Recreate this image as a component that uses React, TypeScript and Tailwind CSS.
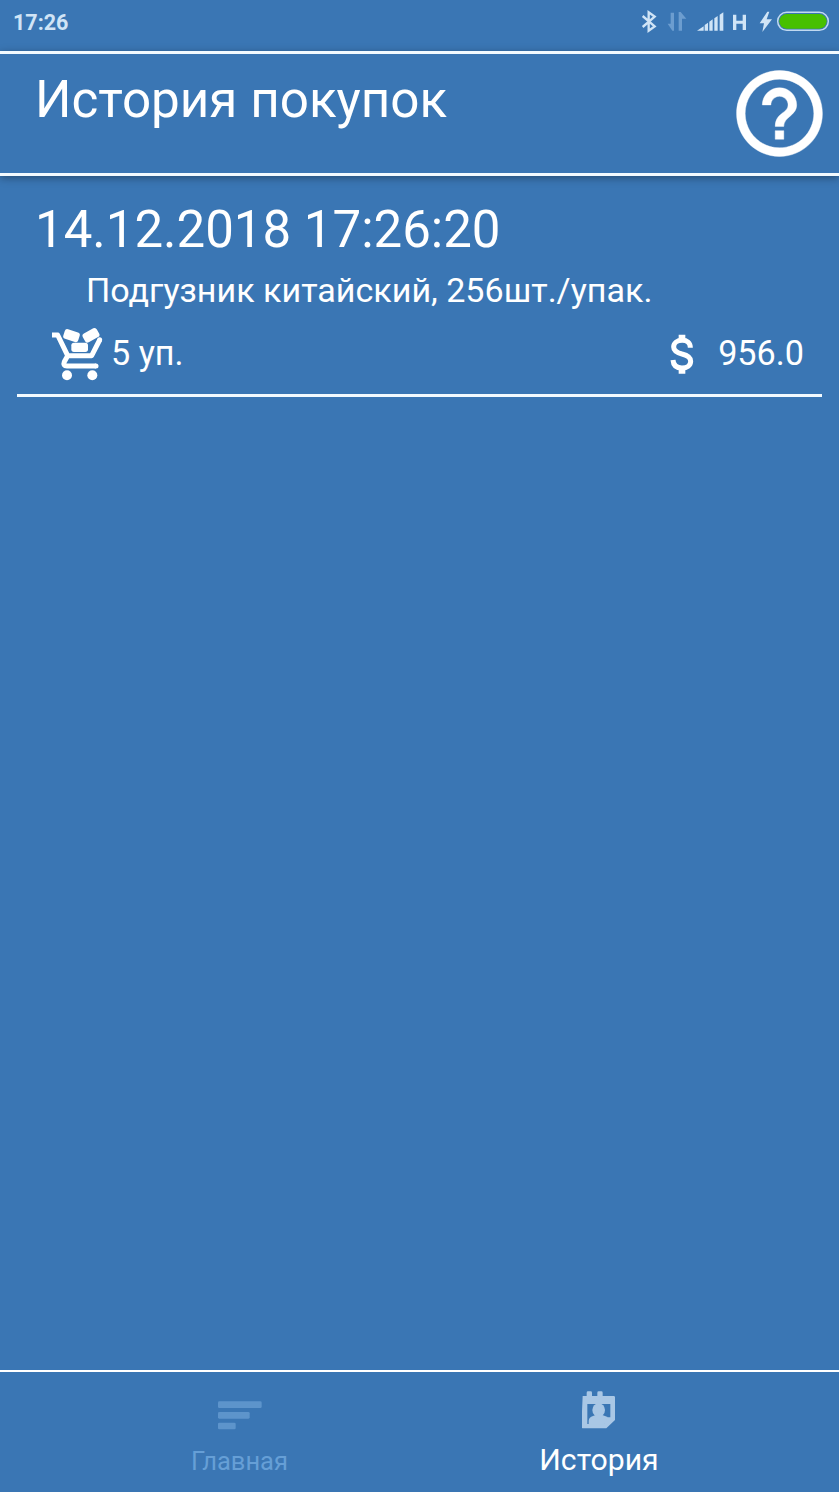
import React from "react";

function StatusIcons() {
  return (
    <svg width="209" height="51" viewBox="0 0 627 153" fill="#d0e4f6">
      <path d="M38 48 L74 79 L56 92 V37 L74 50 L38 81" fill="none" stroke="#d0e4f6" strokeWidth="7" />
      <g fill="#6c9dcf">
        <path d="M122 38h10v54h-5l-14-21h9z" />
        <path d="M146 92h10V56h13l-17-20h-6z" />
      </g>
      <path d="M201 92 l20-13 v13z M224 92v-17l10-7v24z M238 92v-27l10-7v34z M253 92v-37l10-7v44z M269 92v-48l11-7v55z" />
      <path d="M309 44h10v18h19V44h10v46h-10V71h-19v19h-10z" />
      <path d="M412 35 L389 70 H402 L397 96 L426 58 H410 L418 35z" />
      <rect x="443" y="37" width="152" height="54" rx="27" fill="#3a76b4" stroke="#c1d9f1" strokeWidth="4.5" />
      <rect x="448" y="42" width="142" height="44" rx="22" fill="#47c000" />
    </svg>
  );
}

function HelpIcon() {
  return (
    <svg width="103" height="103" viewBox="0 0 24 24" fill="#fff" stroke="#fff" strokeWidth="0.1">
      <path d="M11 18h2v-2h-2v2zm1-16C6.48 2 2 6.48 2 12s4.480 10 10 10 10-4.480 10-10S17.520 2 12 2zm0 18c-4.410 0-8-3.590-8-8s3.590-8 8-8 8 3.590 8 8-3.590 8-8 8zm0-14c-2.210 0-4 1.790-4 4h2c0-1.100.9-2 2-2s2 .9 2 2c0 2-3 1.750-3 5h2c0-2.250 3-2.500 3-5 0-2.210-1.790-4-4-4z" />
    </svg>
  );
}

function CartIcon() {
  return (
    <svg width="54" height="56" viewBox="60 48 162 168" fill="#fff">
      <path
        d="M66 75H83L113 137H185L209 90M113 137L103 155Q98 168 111 168H198"
        fill="none"
        stroke="#fff"
        strokeWidth="15"
        strokeLinejoin="round"
      />
      <circle cx="209" cy="89" r="7.5" />
      <circle cx="198" cy="168" r="7.5" />
      <rect x="-24" y="-15" width="47" height="30" rx="8" transform="translate(125 77) rotate(18)" />
      <rect x="-24" y="-15" width="48" height="30" rx="8" transform="translate(183 76) rotate(-29)" />
      <rect x="124" y="98" width="50" height="28" rx="8" />
      <circle cx="111" cy="196" r="15" />
      <circle cx="187" cy="196" r="15" />
    </svg>
  );
}

function DollarIcon() {
  return (
    <svg width="24" height="40" viewBox="62 43 72 120" fill="none" stroke="#fff">
      <path d="M98 45V61M98 146V162" strokeWidth="20" />
      <path
        d="M123 84C123 69 113 62 99 62C83 62 73 70 73 82C73 94 83 99 98 103C115 107 124 112 124 125C124 138 113 145 98 145C81 145 72 137 71 121"
        strokeWidth="15"
      />
    </svg>
  );
}

function BarsIcon() {
  return (
    <svg width="44" height="30" viewBox="0 0 132 90" fill="#5d94cb">
      <rect x="0" y="1" width="131" height="20" rx="4" />
      <rect x="0" y="33" width="95" height="20" rx="4" />
      <rect x="0" y="65" width="53" height="20" rx="4" />
    </svg>
  );
}

function HistoryIcon() {
  return (
    <svg width="34" height="38" viewBox="187 93 102 114" fill="#a9c7e5">
      <path
        fillRule="evenodd"
        d="M189 108h12V98q0-4 4-4h8q4 0 4 4v10h16V98q0-4 4-4h8q4 0 4 4v10h33q4 0 4 4v68l-26 25h-70q-5 0-5-5zM203 132v60h52v-14q0-6 6-6h11v-40z"
      />
      <ellipse cx="237" cy="150" rx="19" ry="20" />
      <path d="M207 193v-11q1-11 13-14l9-4h17l18 7-9 22z" />
    </svg>
  );
}

export default function App() {
  return (
    <div className="flex h-[1492px] w-[839px] flex-col overflow-hidden bg-[#3a76b4] font-['Roboto',sans-serif] text-white">
      <div className="flex h-[51px] shrink-0 justify-between pl-[13px]">
        <span className="pt-[12px] text-[21.5px] leading-[22px] font-bold text-[#d0e4f6]">17:26</span>
        <StatusIcons />
      </div>
      <header className="z-10 flex h-[125px] shrink-0 justify-between border-y-[3px] border-[#f2faff] bg-[#3a76b4] pr-2 pl-[35px] shadow-[0_2px_8px_rgba(0,0,0,0.35)]">
        <h1 className="pt-[16px] text-[51.2px] leading-[60px] whitespace-nowrap">История покупок</h1>
        <div className="pt-[8px]">
          <HelpIcon />
        </div>
      </header>
      <main className="flex-1 px-[17px]">
        <article className="h-[221px] border-b-[3px] border-[#f2faff] pt-[24px]">
          <h2 className="pl-[18px] text-[51px] leading-[60px] whitespace-nowrap">14.12.2018 17:26:20</h2>
          <p className="mt-[10px] pl-[69px] text-[34.1px] leading-[40px] whitespace-nowrap">Подгузник китайский, 256шт./упак.</p>
          <div className="mt-[16px] flex h-[56px] items-start text-[34.2px] leading-[54px]">
            <div className="ml-[33px]">
              <CartIcon />
            </div>
            <span className="ml-[7px]">5 уп.</span>
            <div className="mt-[8px] mr-[24px] ml-auto">
              <DollarIcon />
            </div>
            <span className="mr-[18px]">956.0</span>
          </div>
        </article>
      </main>
      <nav className="flex h-[122px] shrink-0 justify-center border-t-2 border-white">
        <div className="flex w-[360px] flex-col items-center">
          <div className="mt-[29px]">
            <BarsIcon />
          </div>
          <span className="mt-[15px] text-[25.5px] leading-[30px] text-[#669fd6]">Главная</span>
        </div>
        <div className="flex w-[360px] flex-col items-center pr-px">
          <div className="mt-[19px]">
            <HistoryIcon />
          </div>
          <span className="mt-[13px] text-[30.2px] leading-[36px]">История</span>
        </div>
      </nav>
    </div>
  );
}
